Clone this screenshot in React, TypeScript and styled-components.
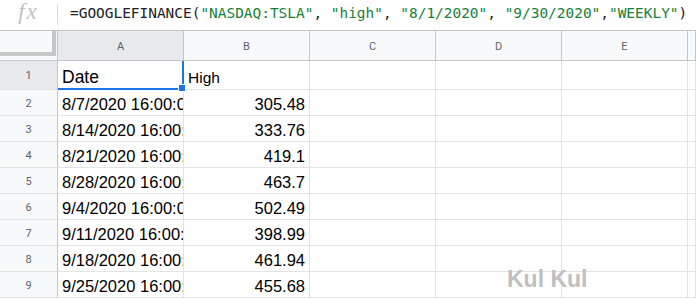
import styled, { createGlobalStyle } from 'styled-components';

const GlobalStyle = createGlobalStyle`
  html, body {
    margin: 0;
    padding: 0;
    background: #fff;
    overflow: hidden;
  }
`;

const rows = [
  ['8/7/2020 16:00:00', '305.48'],
  ['8/14/2020 16:00:00', '333.76'],
  ['8/21/2020 16:00:00', '419.1'],
  ['8/28/2020 16:00:00', '463.7'],
  ['9/4/2020 16:00:00', '502.49'],
  ['9/11/2020 16:00:00', '398.99'],
  ['9/18/2020 16:00:00', '461.94'],
  ['9/25/2020 16:00:00', '455.68'],
];

const columns = ['A', 'B', 'C', 'D', 'E', ''];

function App() {
  return (
    <Page>
      <GlobalStyle />
      <FormulaBar>
        <FxBox>fx</FxBox>
        <Divider />
        <Formula>
          =GOOGLEFINANCE(<Str>"NASDAQ:TSLA"</Str>, <Str>"high"</Str>, <Str>"8/1/2020"</Str>,{' '}
          <Str>"9/30/2020"</Str>,<Str>"WEEKLY"</Str>)
        </Formula>
      </FormulaBar>

      <Sheet>
        <Corner>
          <Freeze />
        </Corner>
        {columns.map((c, i) => (
          <ColHeader key={i} $active={c === 'A'}>{c}</ColHeader>
        ))}

        <RowHeader $active>1</RowHeader>
        <Cell>
          <CellText $size={17.5} $pb={3}>Date</CellText>
          <Selection>
            <Handle />
          </Selection>
        </Cell>
        <Cell>
          <CellText $size={15.5} $pb={2}>High</CellText>
        </Cell>
        <Cell />
        <Cell />
        <Cell />
        <Cell />

        {rows.map(([date, high], i) => (
          <Row key={i} n={i + 2} date={date} high={high} />
        ))}
      </Sheet>

      <Watermark>Kul Kul</Watermark>
    </Page>
  );
}

function Row({ n, date, high }: { n: number; date: string; high: string }) {
  return (
    <>
      <RowHeader>{n}</RowHeader>
      <Cell>
        <CellText>{date}</CellText>
      </Cell>
      <Cell>
        <CellText $right>{high}</CellText>
      </Cell>
      <Cell />
      <Cell />
      <Cell />
      <Cell />
    </>
  );
}

const Page = styled.div`
  position: relative;
  width: 696px;
  height: 299px;
  overflow: hidden;
  background: #fff;
`;

const FormulaBar = styled.div`
  display: flex;
  align-items: flex-start;
  height: 30px;
  border-bottom: 1px solid #c4c7c5;
`;

const FxBox = styled.div`
  width: 57px;
  flex: none;
  padding-top: 1px;
  text-align: center;
  font-family: 'Liberation Serif', serif;
  font-style: italic;
  font-size: 23px;
  line-height: 22px;
  letter-spacing: 2px;
  color: #c2c2c2;
`;

const Divider = styled.div`
  width: 1px;
  height: 20px;
  margin-top: 5px;
  background: #dadce0;
  flex: none;
`;

const Formula = styled.div`
  padding: 5px 0 0 12px;
  font-family: 'DejaVu Sans Mono', monospace;
  font-size: 14.45px;
  line-height: 17px;
  color: #202124;
  white-space: nowrap;
`;

const Str = styled.span`
  color: #188038;
`;

const Sheet = styled.div`
  display: grid;
  grid-template-columns: 58px repeat(5, 126px) 1fr;
  grid-template-rows: 30px 29px repeat(8, 26px) 1fr;
  height: 268px;
`;

const Corner = styled.div`
  box-sizing: border-box;
  background: #f8f9fa;
  border-right: 1px solid #c4c7c5;
  border-bottom: 1px solid #c4c7c5;
  position: relative;
`;

const Freeze = styled.div`
  position: absolute;
  left: 0;
  top: 0;
  width: 56px;
  height: 25px;
  box-sizing: border-box;
  border-right: 4px solid #c4c7c5;
  border-bottom: 4px solid #c4c7c5;
`;

const ColHeader = styled.div<{ $active?: boolean }>`
  box-sizing: border-box;
  display: flex;
  align-items: center;
  justify-content: center;
  background: ${p => (p.$active ? '#e8eaed' : '#f8f9fa')};
  border-right: 1px solid #c4c7c5;
  border-bottom: 1px solid #c4c7c5;
  font-family: Roboto, 'Liberation Sans', sans-serif;
  font-size: 11px;
  color: #5f6368;
  padding-top: 1px;
`;

const RowHeader = styled.div<{ $active?: boolean }>`
  box-sizing: border-box;
  display: flex;
  align-items: center;
  justify-content: center;
  background: ${p => (p.$active ? '#e8eaed' : '#f8f9fa')};
  border-right: 1px solid #c4c7c5;
  border-bottom: 1px solid #e1e3e1;
  font-family: Roboto, 'Liberation Sans', sans-serif;
  font-size: 11px;
  color: #5f6368;
  padding-top: 1px;
`;

const Cell = styled.div`
  box-sizing: border-box;
  position: relative;
  display: flex;
  align-items: flex-end;
  min-width: 0;
  border-right: 1px solid #e2e3e3;
  border-bottom: 1px solid #e2e3e3;
`;

const CellText = styled.div<{ $right?: boolean; $size?: number; $pb?: number }>`
  width: 100%;
  overflow: hidden;
  white-space: nowrap;
  box-sizing: border-box;
  padding: 0 4px ${p => p.$pb ?? 2}px 4px;
  text-align: ${p => (p.$right ? 'right' : 'left')};
  font-family: 'Liberation Sans', Arial, sans-serif;
  font-size: ${p => p.$size ?? 16.5}px;
  line-height: 18px;
  color: #000;
`;

const Selection = styled.div`
  position: absolute;
  top: 0;
  left: 0;
  right: -1px;
  bottom: -1px;
  border-right: 2px solid #1a73e8;
  border-bottom: 2px solid #1a73e8;
  z-index: 2;
  pointer-events: none;
`;

const Handle = styled.div`
  position: absolute;
  right: -4px;
  bottom: -4px;
  width: 6px;
  height: 6px;
  background: #1a73e8;
  border: 1px solid #fff;
`;

const Watermark = styled.div`
  position: absolute;
  left: 507px;
  top: 268px;
  font-family: 'Liberation Sans', Arial, sans-serif;
  font-weight: 700;
  font-size: 23px;
  line-height: 23px;
  color: #bfbfbf;
  white-space: nowrap;
`;

export default App;
